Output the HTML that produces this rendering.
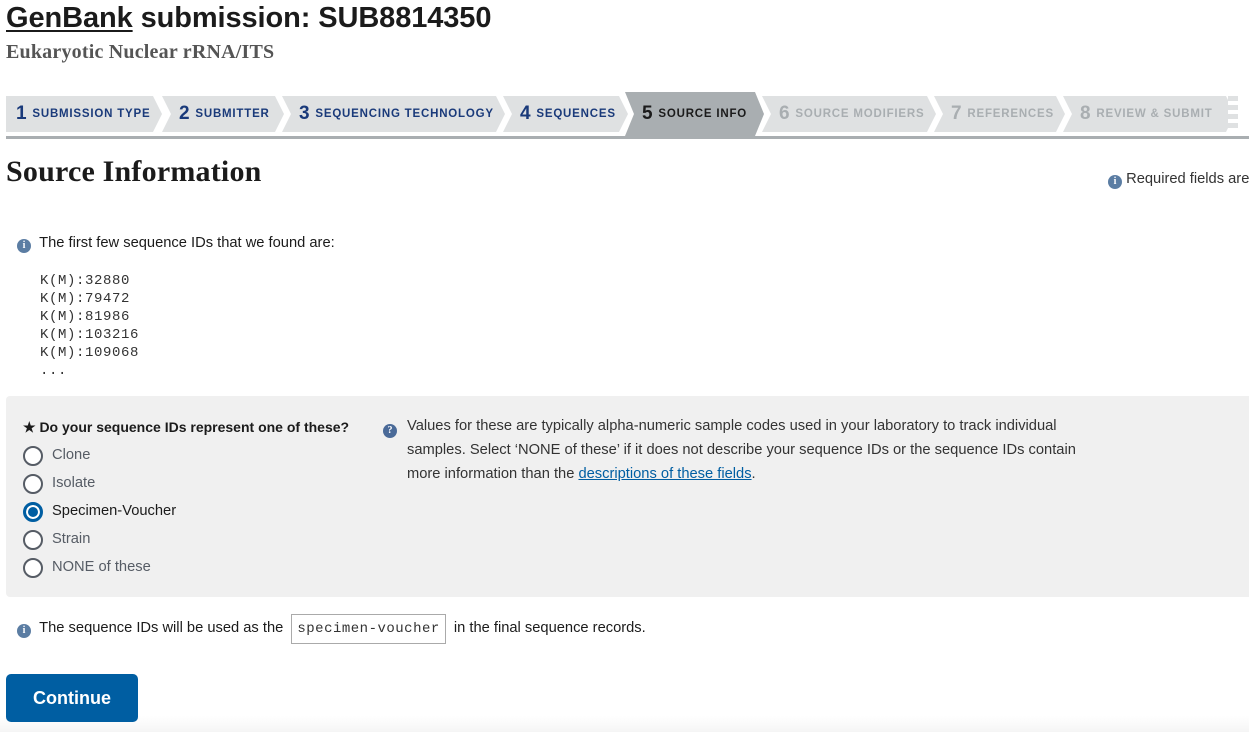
<!DOCTYPE html>
<html><head><meta charset="utf-8"><style>
*{margin:0;padding:0;box-sizing:border-box}
body{width:1249px;height:732px;overflow:hidden;background:#fff;font-family:"Liberation Sans",sans-serif;color:#1b1b1b;position:relative}
.abs{position:absolute;white-space:nowrap}
.h1{left:6px;top:2px;font-size:29px;font-weight:bold;color:#1b1b1b;letter-spacing:-0.1px}
.h1 u{text-decoration-thickness:2px;text-underline-offset:3px}
.sub{left:6px;top:41px;font-family:"Liberation Serif",serif;font-weight:bold;font-size:20px;color:#555;letter-spacing:0.2px}
.step{position:absolute;top:96px;height:36px;background:#dfe1e2;clip-path:polygon(0 0,calc(100% - 9px) 0,100% 50%,calc(100% - 9px) 100%,0 100%,9px 50%);font-size:11.5px;font-weight:bold;letter-spacing:0.8px;color:#1a3a7a;padding-left:17px;line-height:36px;white-space:nowrap}
.step b{font-size:19px;margin-right:5px;vertical-align:-2px}
.step.first{clip-path:polygon(0 0,calc(100% - 9px) 0,100% 50%,calc(100% - 9px) 100%,0 100%);padding-left:10px}
.step.act{background:#a9aeb1;color:#1b1b1b;top:92px;height:44px;line-height:44px}
.step.dis{color:#a9aeb1}
.line{left:6px;top:136px;width:1243px;height:3px;background:#a9aeb1}
.h2{left:6px;top:155px;font-family:"Liberation Serif",serif;font-weight:bold;font-size:30px;color:#1b1b1b;letter-spacing:0.2px}
.info{display:inline-block;width:14px;height:14px;border-radius:50%;background:#5b7da3;color:#fff;font-size:10px;font-weight:bold;text-align:center;line-height:14px;font-family:"Liberation Serif",serif;vertical-align:-1px}
.t15{font-size:14.7px;color:#1b1b1b}
.mono{left:40px;top:272px;font-family:"Liberation Mono",monospace;font-size:14px;letter-spacing:0.6px;line-height:18px;color:#333;white-space:pre}
.panel{left:6px;top:396px;width:1243px;height:201px;background:#f0f0f0;border-radius:4px 0 0 4px}
.radio{position:absolute;left:23px;width:20px;height:20px;border:2px solid #565c65;border-radius:50%;background:#fff}
.radio.on{border:3px solid #005ea2;box-shadow:inset 0 0 0 2px #fff;background:#005ea2}
.rl{position:absolute;left:52px;font-size:14.7px;color:#565c65}
.code{display:inline-block;border:1px solid #aaa;font-family:"Liberation Mono",monospace;font-size:14px;letter-spacing:0.5px;padding:2px 5px;color:#333;background:#fff;margin:0 4px}
.btn{left:6px;top:674px;width:132px;height:48px;background:#005ea2;border-radius:5px;color:#fff;font-weight:bold;font-size:18px;text-align:center;line-height:48px}
</style></head><body>
<div class="abs h1"><u>GenBank</u> submission: SUB8814350</div>
<div class="abs sub">Eukaryotic Nuclear rRNA/ITS</div>

<div class="step first" style="left:6px;width:156px"><b>1</b>SUBMISSION TYPE</div>
<div class="step" style="left:162px;width:122px"><b>2</b>SUBMITTER</div>
<div class="step" style="left:282px;width:223px"><b>3</b>SEQUENCING TECHNOLOGY</div>
<div class="step" style="left:503px;width:125px"><b>4</b>SEQUENCES</div>
<div class="step act" style="left:625px;width:139px"><b>5</b>SOURCE INFO</div>
<div class="step dis" style="left:762px;width:174px"><b>6</b>SOURCE MODIFIERS</div>
<div class="step dis" style="left:934px;width:131px"><b>7</b>REFERENCES</div>
<div class="step dis" style="left:1063px;width:172px"><b>8</b>REVIEW &amp; SUBMIT</div>
<div class="abs" style="left:1228px;top:96px;width:10px;height:36px;background:repeating-linear-gradient(#dfe1e2 0 5px,#fff 5px 9px)"></div>
<div class="abs line"></div>

<div class="abs h2">Source Information</div>
<div class="abs t15" style="left:1108px;top:171px;color:#333"><span class="info">i</span> Required fields are</div>

<div class="abs t15" style="left:17px;top:235px"><span class="info">i</span>&nbsp;&nbsp;The first few sequence IDs that we found are:</div>
<div class="abs mono">K(M):32880
K(M):79472
K(M):81986
K(M):103216
K(M):109068
...</div>

<div class="abs panel"></div>
<div class="abs" style="left:23px;top:419px;font-size:14px;font-weight:bold">★ Do your sequence IDs represent one of these?</div>
<div class="radio" style="top:446px"></div><div class="rl" style="top:447px">Clone</div>
<div class="radio" style="top:474px"></div><div class="rl" style="top:475px">Isolate</div>
<div class="radio on" style="top:502px"></div><div class="rl" style="top:503px;color:#1b1b1b">Specimen-Voucher</div>
<div class="radio" style="top:530px"></div><div class="rl" style="top:531px">Strain</div>
<div class="radio" style="top:558px"></div><div class="rl" style="top:559px">NONE of these</div>
<div class="abs" style="left:383px;top:419px"><span class="info" style="background:#4a6a98">?</span></div>
<div class="abs t15" style="left:407px;top:414px;line-height:24px;color:#333;white-space:normal;width:690px">Values for these are typically alpha-numeric sample codes used in your laboratory to track individual samples. Select ‘NONE of these’ if it does not describe your sequence IDs or the sequence IDs contain more information than the <a style="color:#005ea2" href="#">descriptions of these fields</a>.</div>

<div class="abs t15" style="left:17px;top:614px;line-height:24px"><span class="info">i</span>&nbsp;&nbsp;The sequence IDs will be used as the <span class="code">specimen-voucher</span> in the final sequence records.</div>

<div class="abs btn">Continue</div>
<div class="abs" style="left:0;top:716px;width:1249px;height:16px;background:linear-gradient(#fff,#f5f5f5);z-index:-1"></div>
</body></html>
